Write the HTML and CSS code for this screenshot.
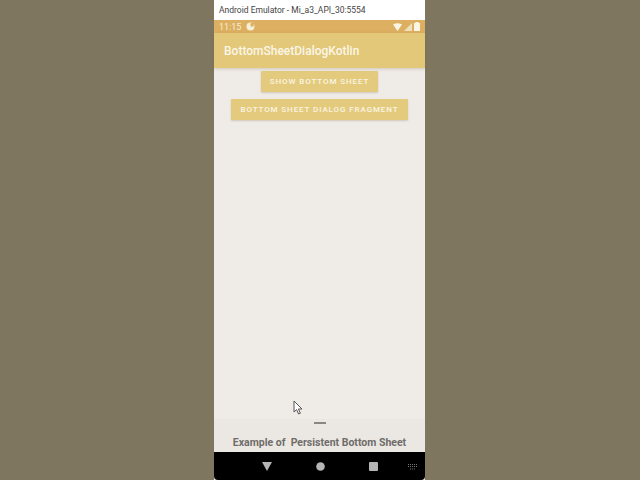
FILE: index.html
```html
<!DOCTYPE html>
<html lang="en">
<head>
    <meta charset="UTF-8">
    <title>BottomSheetDialogKotlin</title>
    <link rel="stylesheet" href="styles.css">
</head>
<body>
    <div class="phone">
        <div class="window-title">Android Emulator - Mi_a3_API_30:5554</div>
        <div class="status-bar">
            <span class="clock">11:15</span>
            <svg class="status-dot" width="9" height="9" viewBox="0 0 9 9"><circle cx="4.5" cy="4.5" r="4" fill="#f8efd8"/><path d="M4.5 4.5V1h3.2v3.5z" fill="#dcb060"/></svg>
            <span class="status-icons">
                <svg width="9" height="8" viewBox="0 0 9 8"><path d="M0 1.5Q4.5-1 9 1.5L4.5 8z" fill="#fbf5e6"/></svg>
                <svg width="8" height="8" viewBox="0 0 8 8"><path d="M0 8L8 0v8z" fill="#efe0bd"/></svg>
                <svg width="6" height="9" viewBox="0 0 6 9"><path d="M1.5 0h3v1H6v8H0V1h1.5z" fill="#fbf5e6"/></svg>
            </span>
        </div>
        <div class="app-bar">BottomSheetDialogKotlin</div>
        <div class="content">
            <button class="action">Show Bottom Sheet</button>
            <button class="action">Bottom Sheet Dialog Fragment</button>
            <svg class="cursor" width="10" height="15" viewBox="0 0 10 15"><path d="M1 1v11l2.6-2.4L5.6 14l1.8-.8-2-4.2H9z" fill="#fff" stroke="#555" stroke-width="1"/></svg>
        </div>
        <div class="sheet">
            <div class="handle"></div>
            <div class="sheet-text">Example of&nbsp; Persistent Bottom Sheet</div>
        </div>
        <div class="nav-bar">
            <svg width="10" height="9" viewBox="0 0 10 9"><path d="M0 0h10L5 9z" fill="#b5b5b5"/></svg>
            <svg width="9" height="9" viewBox="0 0 9 9"><circle cx="4.5" cy="4.5" r="4.3" fill="#b5b5b5"/></svg>
            <svg width="9" height="9" viewBox="0 0 9 9"><rect width="9" height="9" rx="1" fill="#b5b5b5"/></svg>
            <svg class="keyboard" width="10" height="6" viewBox="0 0 10 6"><path d="M0 .5h10M0 2.5h10M2 5h6" stroke="#777" stroke-width="1" stroke-dasharray="1 1"/></svg>
        </div>
    </div>
</body>
</html>
```

FILE: styles.css
```css
html, body {
    margin: 0;
    height: 100%;
}
body {
    background-color: #7f7660;
    font-family: "Roboto", sans-serif;
    display: flex;
    justify-content: center;
    overflow: hidden;
}
.phone {
    width: 211px;
    height: 480px;
    margin-left: -1px;
    display: flex;
    flex-direction: column;
    background-color: #efebe7;
}
.window-title {
    height: 20px;
    line-height: 20px;
    padding-left: 5px;
    background-color: #fff;
    color: #444;
    font-size: 8.5px;
    white-space: nowrap;
}
.status-bar {
    height: 13px;
    display: flex;
    align-items: center;
    gap: 5px;
    padding: 0 5px;
    background-color: #dcb060;
    color: #f6ecd6;
    font-size: 9px;
}
.status-icons {
    margin-left: auto;
    display: flex;
    align-items: center;
    gap: 2px;
}
.app-bar {
    height: 33px;
    line-height: 33px;
    padding: 2px 0 0 10px;
    background-color: #e2c878;
    color: #fbf6e8;
    font-size: 12px;
    font-weight: 500;
    box-shadow: 0 1px 3px rgba(120, 100, 60, 0.25);
}
.content {
    position: relative;
    flex: 1;
    display: flex;
    flex-direction: column;
    align-items: center;
    gap: 7px;
    padding-top: 3px;
}
.action {
    height: 21px;
    padding: 0 9px;
    border: none;
    border-radius: 1px;
    background-color: #e3ca7c;
    color: #fbf5e4;
    font-family: inherit;
    font-size: 8px;
    font-weight: 500;
    letter-spacing: 0.9px;
    text-transform: uppercase;
    box-shadow: 0 1px 2px rgba(120, 100, 60, 0.25);
}
.cursor {
    position: absolute;
    left: 79px;
    top: 332px;
}
.sheet {
    height: 33px;
    display: flex;
    flex-direction: column;
    align-items: center;
    background-color: #ebe8e4;
}
.handle {
    width: 12px;
    height: 2px;
    margin-top: 3px;
    background-color: #8a8782;
}
.sheet-text {
    margin-top: 12px;
    color: #6f6c69;
    font-size: 10.5px;
    font-weight: 700;
    white-space: nowrap;
}
.nav-bar {
    position: relative;
    height: 28px;
    display: flex;
    align-items: center;
    justify-content: center;
    gap: 44px;
    background-color: #000;
    border-radius: 0 0 4px 4px;
    box-sizing: border-box;
}
.keyboard {
    position: absolute;
    right: 7px;
    top: 12px;
}
```
